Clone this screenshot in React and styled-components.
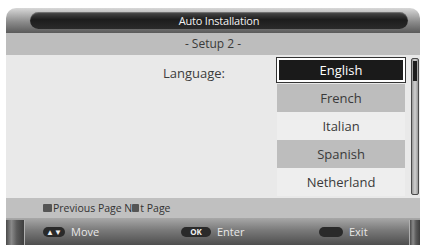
import React from 'react'
import styled, {createGlobalStyle} from 'styled-components'

const Global = createGlobalStyle`
    html, body {
        margin : 0;
        padding : 0;
        background : #ffffff;
    }
    body {
        font-family : "Open Sans", "Noto Sans", sans-serif;
    }
`
const Screen = styled.div`
    width : 423px;
    height : 245px;
    padding : 8px 3px 0 6px;
    box-sizing : border-box;
    overflow : hidden;
`
const Panel = styled.div`
    display : flex;
    flex-direction : column;
    height : 100%;
`
const TitleBar = styled.div`
    height : 25px;
    display : flex;
    align-items : center;
    padding : 0 12px 0 24px;
    background : linear-gradient(to bottom, #d8d8d8 0%, #8c8c8c 55%, #5a5a5a 100%);
    border-radius : 10px 10px 0 0;
`
const Pill = styled.div`
    flex : 1;
    height : 17px;
    border-radius : 9px;
    background : linear-gradient(to bottom, #4a4a4a 0%, #1c1c1c 45%, #2a2a2a 100%);
    box-shadow : inset 0 1px 1px rgba(255,255,255,0.25);
    color : #f2f2f2;
    font-size : 11px;
    line-height : 17px;
    text-align : center;
    letter-spacing : -0.2px;
`
const SetupBand = styled.div`
    height : 22px;
    background : #bdbdbd;
    color : #3a3a3a;
    font-size : 12px;
    line-height : 22px;
    text-align : center;
`
const Content = styled.div`
    height : 143px;
    background : #e9e9e9;
    display : flex;
    align-items : flex-start;
    padding : 3px 0 0 157px;
    box-sizing : border-box;
`
const Label = styled.div`
    width : 114px;
    padding-top : 6px;
    font-size : 13px;
    color : #3c3c3c;
`
const List = styled.div`
    width : 128px;
    display : flex;
    flex-direction : column;
`
const Row = styled.div`
    height : ${p => p.active ? 24 : 28}px;
    margin-bottom : ${p => p.active ? 2 : 0}px;
    box-sizing : border-box;
    background : ${p => p.active ? '#1a1a1a' : p.shade ? '#bdbdbd' : '#eeeeee'};
    color : ${p => p.active ? '#ffffff' : '#3a3a3a'};
    border : ${p => p.active ? '2px solid #ffffff' : 'none'};
    outline : ${p => p.active ? '1px solid #333' : 'none'};
    display : flex;
    align-items : center;
    justify-content : center;
    font-size : 13px;
`
const Scroll = styled.div`
    margin-left : 6px;
    width : 8px;
    height : 137px;
    box-sizing : border-box;
    border : 1px solid #4a4a4a;
    border-radius : 2px;
    background : linear-gradient(to right, #9a9a9a, #d0d0d0 50%, #9a9a9a);
    padding : 2px 1px;
`
const Thumb = styled.div`
    height : 20px;
    background : #1e1e1e;
`
const PageBar = styled.div`
    height : 20px;
    background : #c0c0c0;
    display : flex;
    align-items : center;
    padding-left : 37px;
    font-size : 10.5px;
    color : #333;
`
const Key = styled.span`
    display : inline-block;
    width : ${p => p.w || 9}px;
    height : 8px;
    background : #555;
    border-radius : 1px;
    margin-right : ${p => p.mr || 1}px;
    vertical-align : middle;
`
const Footer = styled.div`
    flex : 1;
    display : flex;
    align-items : center;
    background : linear-gradient(to bottom, #a8a8a8 0%, #7a7a7a 45%, #4e4e4e 100%);
    font-size : 11px;
    color : #e8e8e8;
    padding : 0 0 0 37px;
    position : relative;
`
const Notch = styled.div`
    position : absolute;
    top : 2px;
    bottom : 0;
    ${p => p.right ? 'right : 0;' : 'left : 0;'}
    width : ${p => p.right ? 10 : 18}px;
    background : linear-gradient(to right, #4a4a4a, #8a8a8a 30%, #5a5a5a 60%, #3e3e3e);
    border-${p => p.right ? 'left' : 'right'} : 1px solid #b0b0b0;
`
const Hint = styled.div`
    display : flex;
    align-items : center;
    width : ${p => p.w}px;
`
const Btn = styled.span`
    display : inline-flex;
    align-items : center;
    justify-content : center;
    height : 10px;
    min-width : ${p => p.w}px;
    padding : 0 2px;
    border-radius : 5px;
    background : #2a2a2a;
    color : #f0f0f0;
    font-size : 8px;
    font-weight : 700;
    margin-right : 6px;
`

const languages = ['English', 'French', 'Italian', 'Spanish', 'Netherland']

function App(){
    return (
        <Screen>
            <Global/>
            <Panel>
                <TitleBar>
                    <Pill>Auto Installation</Pill>
                </TitleBar>
                <SetupBand>- Setup 2 -</SetupBand>
                <Content>
                    <Label>Language:</Label>
                    <List>
                        {languages.map((lang, index) =>
                            <Row key={index} active={index === 0} shade={index % 2 === 1}>
                                {lang}
                            </Row>)}
                    </List>
                    <Scroll>
                        <Thumb/>
                    </Scroll>
                </Content>
                <PageBar>
                    <Key/>Previous Page N<Key w={7} mr={0}/>t Page
                </PageBar>
                <Footer>
                    <Notch/>
                    <Hint w={138}><Btn w={18}>▲▼</Btn>Move</Hint>
                    <Hint w={138}><Btn w={26}>OK</Btn>Enter</Hint>
                    <Hint w={60}><Btn w={20}></Btn>Exit</Hint>
                    <Notch right/>
                </Footer>
            </Panel>
        </Screen>
    )
}

export default App
